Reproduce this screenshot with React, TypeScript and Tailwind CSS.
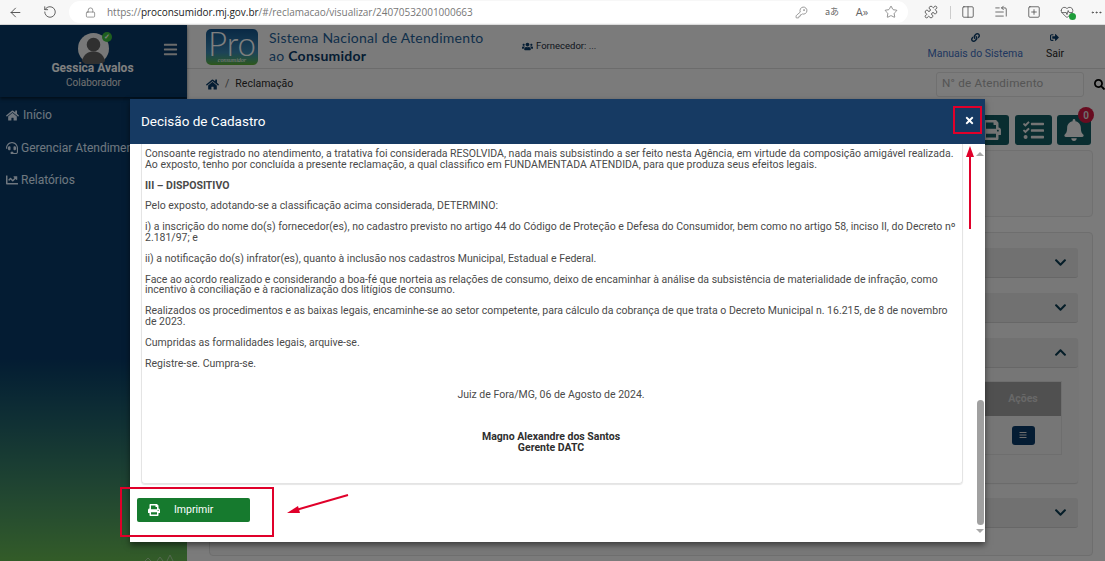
import {
  ArrowLeft,
  Columns2,
  Ellipsis,
  HeartPulse,
  KeyRound,
  Lock,
  Puzzle,
  RotateCw,
  SquarePlus,
  Star,
  ListStart,
} from "lucide-react";
import {
  FaBars,
  FaBell,
  FaChartLine,
  FaChevronDown,
  FaChevronUp,
  FaHeadset,
  FaHome,
  FaLink,
  FaPrint,
  FaSearch,
  FaSignOutAlt,
  FaTasks,
  FaTimes,
  FaUsers,
} from "react-icons/fa";

const BrowserBar = () => (
  <div className="flex h-[25px] shrink-0 items-center border-b border-[#dcdcdc] bg-[#f7f7f7] text-[#444]">
    <ArrowLeft className="ml-[8px] h-[15px] w-[15px]" strokeWidth={1.4} />
    <RotateCw className="ml-[20px] h-[14px] w-[14px] -scale-x-100" strokeWidth={1.4} />
    <div className="ml-[12px] flex h-[22px] w-[839px] items-center rounded-full bg-white pl-[16px] pr-[10px]">
      <Lock className="h-[11px] w-[11px] text-[#666]" strokeWidth={1.4} />
      <span className="ml-[11px] font-['Open_Sans',sans-serif] text-[10px] tracking-[-0.03px] text-[#777]">
        https://<span className="text-[#222]">proconsumidor.mj.gov.br</span>/#/reclamacao/visualizar/24070532001000663
      </span>
      <div className="ml-auto flex items-center gap-[14px] text-[#666]">
        <KeyRound className="mr-[2px] h-[13px] w-[13px]" strokeWidth={1.2} />
        <span className="w-[16px] text-center font-['Noto_Sans_CJK_JP',sans-serif] text-[9px]">aあ</span>
        <span className="w-[16px] text-center font-['Open_Sans',sans-serif] text-[11px]">A»</span>
        <Star className="h-[14px] w-[14px]" strokeWidth={1.2} />
      </div>
    </div>
    <Puzzle className="ml-[16px] h-[14px] w-[14px]" strokeWidth={1.4} />
    <div className="ml-[12px] h-[13px] w-px bg-[#ccc]" />
    <Columns2 className="ml-[10px] h-[14px] w-[14px]" strokeWidth={1.3} />
    <ListStart className="ml-[19px] h-[14px] w-[14px]" strokeWidth={1.3} />
    <SquarePlus className="ml-[19px] h-[14px] w-[14px]" strokeWidth={1.3} />
    <div className="relative ml-[19px]">
      <HeartPulse className="h-[14px] w-[14px]" strokeWidth={1.3} />
      <span className="absolute -bottom-[1px] -right-[2px] h-[7px] w-[7px] rounded-full bg-[#1f9d3a]" />
    </div>
    <Ellipsis className="ml-[16px] h-[13px] w-[13px]" strokeWidth={1.5} />
  </div>
);

const Sidebar = () => (
  <aside className="relative flex w-[187px] shrink-0 flex-col bg-linear-to-b from-[#083866] from-62% to-[#66b850] font-['Roboto',sans-serif]">
    <div className="relative flex h-[72px] shrink-0 flex-col items-center bg-[#083866] pt-[8px] shadow-[0_2px_3px_rgba(0,0,0,0.5)]">
      <div className="relative h-[31px] w-[31px]">
        <svg viewBox="0 0 32 32" className="h-full w-full">
          <circle cx="16" cy="16" r="16" fill="#f0f0f0" />
          <circle cx="16" cy="12" r="7" fill="#606060" />
          <path d="M4 29c2-8 7-10 12-10s10 2 12 10a16 16 0 0 1-24 0z" fill="#606060" />
        </svg>
        <span className="absolute -right-[3px] -top-[1px] flex h-[10px] w-[10px] items-center justify-center rounded-full bg-[#3fbf3f] text-[7px] font-bold leading-none text-white">
          ✓
        </span>
      </div>
      <span className="-mt-[3px] -translate-x-[1px] text-[12px] font-bold leading-[15px] text-white">Gessica Avalos</span>
      <span className="text-[10px] leading-[13px] text-[#e0e0e0]">Colaborador</span>
      <FaBars className="absolute right-[9px] top-[17px] h-[15px] w-[15px] text-[#d6d6d6]" />
    </div>
    <nav className="mt-[2px] flex flex-col text-[12px] leading-[32.5px] text-[#dfeeff]">
      <a className="flex items-center gap-[4px] pl-[6px]">
        <FaHome className="h-[13px] w-[13px]" /> Início
      </a>
      <a className="flex items-center gap-[3px] whitespace-nowrap pl-[6px]">
        <FaHeadset className="h-[12px] w-[12px]" /> Gerenciar Atendimentos
      </a>
      <a className="flex items-center gap-[3px] pl-[6px]">
        <FaChartLine className="h-[12px] w-[12px]" /> Relatórios
      </a>
    </nav>
    <svg viewBox="0 0 30 6" className="absolute bottom-0 right-[12px] h-[6px] w-[30px] text-[#a8d0a0]">
      <path d="M0 6l3-3 3 3M12 6l3-4 3 4M22 6l3-6 3 6" fill="none" stroke="currentColor" />
    </svg>
  </aside>
);

const TopHeader = () => (
  <header className="flex h-[44px] shrink-0 items-center border-b border-[#d8d8d8] pl-[19px] pr-[41px]">
    <div className="flex h-[36px] w-[52px] flex-col items-center justify-end rounded-[5px] bg-linear-to-b from-[#12528a] via-[#3a86b0] via-65% to-[#5cb02a] pb-[1px] text-white">
      <span className="font-['Lato',sans-serif] text-[33px] font-light leading-[27px]">Pro</span>
      <span className="font-['Liberation_Serif',serif] text-[6px] italic leading-[7px]">consumidor</span>
    </div>
    <div className="ml-[11px] w-[240px] font-['Lato',sans-serif] text-[14px] leading-[18px] tracking-[0.25px] text-[#1f5f96]">
      <div className="whitespace-nowrap">Sistema Nacional de Atendimento</div>
      <div>
        ao <b className="text-[#0a3a66]">Consumidor</b>
      </div>
    </div>
    <div className="ml-[13px] flex items-center gap-[3px] self-start pt-[14px] font-['Roboto',sans-serif] text-[9.5px] text-[#1c2c3c]">
      <FaUsers className="h-[11px] w-[11px] text-[#0a3a66]" /> Fornecedor: ...
    </div>
    <div className="ml-auto flex flex-col items-center gap-[5px] font-['Roboto',sans-serif] text-[10.5px] leading-[14px] text-[#3f6fc0]">
      <FaLink className="h-[9px] w-[9px] text-[#0a3a66]" />
      Manuais do Sistema
    </div>
    <div className="ml-[23px] flex flex-col items-center gap-[5px] font-['Roboto',sans-serif] text-[10.5px] leading-[14px] text-[#222]">
      <FaSignOutAlt className="h-[9px] w-[9px] text-[#0a3a66]" />
      Sair
    </div>
  </header>
);

const Breadcrumb = () => (
  <div className="flex h-[30px] shrink-0 items-center pl-[19px] font-['Roboto',sans-serif] text-[10.5px] text-[#2a2a2a]">
    <FaHome className="h-[13px] w-[13px] text-[#0a3a66]" />
    <span className="mx-[6px] text-[#666]">/</span>
    <span>Reclamação</span>
    <div className="ml-auto flex h-[25px] w-[148px] items-center rounded-[3px] border border-[#e0e0e0] bg-[#f8f8f8] pl-[5px] text-[11.7px] tracking-[0.2px] text-[#aaa]">
      N° de Atendimento
    </div>
    <div className="flex h-[25px] w-[21px] shrink-0 items-center justify-end">
      <FaSearch className="h-[11px] w-[11px] shrink-0 text-black" />
    </div>
  </div>
);

const Toolbar = () => (
  <div className="mt-[16px] flex shrink-0 justify-end pr-[14px]">
    <div className="flex h-[30px] w-[37px] items-center justify-center rounded-[3px] bg-[#125a60]">
      <FaPrint className="h-[20px] w-[20px] text-[#e8e8e8]" />
    </div>
    <div className="ml-[6px] flex h-[30px] w-[37px] items-center justify-center rounded-[3px] bg-[#125a60]">
      <FaTasks className="h-[21px] w-[21px] text-[#e8e8e8]" />
    </div>
    <div className="relative ml-[5px] flex h-[30px] w-[34px] items-center justify-center rounded-[3px] bg-[#125a60]">
      <FaBell className="h-[22px] w-[22px] text-[#f4f4f4]" />
      <span className="absolute -right-[3px] -top-[8px] flex h-[16px] w-[16px] items-center justify-center rounded-full bg-[#d01840] font-['Roboto',sans-serif] text-[10px] font-bold text-[#ddd]">
        0
      </span>
    </div>
  </div>
);

const AccordionRow = ({ open = false }: { open?: boolean }) => (
  <div className="flex h-[30px] shrink-0 items-center justify-end rounded-[3px] border-b border-[#cfcfcf] bg-[#e2e2e2] pr-[11px] text-[#0a3a50]">
    {open ? <FaChevronUp className="h-[13px] w-[13px]" /> : <FaChevronDown className="h-[13px] w-[13px]" />}
  </div>
);

const Panels = () => (
  <div className="ml-[22px] mr-[12px] mt-[5px] flex flex-col gap-[15px]">
    <div className="h-[67px] rounded-[4px] border border-[#e0e0e0] bg-[#f2f2f2]" />
    <div className="flex h-[324px] flex-col gap-[15px] rounded-[4px] border border-[#dcdcdc] bg-[#f0f0f0] pb-0 pl-[14px] pr-[14px] pt-[15px]">
      <AccordionRow />
      <AccordionRow />
      <div className="flex h-[145px] shrink-0 flex-col rounded-[3px] bg-[#ececec] shadow-[0_1px_1px_rgba(0,0,0,0.12)]">
        <AccordionRow open />
        <div className="ml-auto mr-[16px] mt-[13px] w-[78px] border border-[#dcdcdc] font-['Roboto',sans-serif]">
          <div className="flex h-[34px] items-center justify-center bg-[#a0a0a0] text-[10.5px] font-bold text-[#d0d0d0]">
            Ações
          </div>
          <div className="flex h-[38px] items-center justify-center">
            <span className="flex h-[19px] w-[23px] items-center justify-center rounded-[3px] bg-[#083866]">
              <FaBars className="h-[8px] w-[8px] text-[#ddd]" />
            </span>
          </div>
        </div>
      </div>
      <AccordionRow />
    </div>
  </div>
);

const paragraphs = [
  "Pelo exposto, adotando-se a classificação acima considerada, DETERMINO:",
  "i) a inscrição do nome do(s) fornecedor(es), no cadastro previsto no artigo 44 do Código de Proteção e Defesa do Consumidor, bem como no artigo 58, inciso II, do Decreto nº 2.181/97; e",
  "ii) a notificação do(s) infrator(es), quanto à inclusão nos cadastros Municipal, Estadual e Federal.",
  "Face ao acordo realizado e considerando a boa-fé que norteia as relações de consumo, deixo de encaminhar à análise da subsistência de materialidade de infração, como incentivo à conciliação e à racionalização dos litígios de consumo.",
  "Realizados os procedimentos e as baixas legais, encaminhe-se ao setor competente, para cálculo da cobrança de que trata o Decreto Municipal n. 16.215, de 8 de novembro de 2023.",
  "Cumpridas as formalidades legais, arquive-se.",
  "Registre-se. Cumpra-se.",
];

const DecisionModal = () => (
  <div className="absolute left-[130px] top-[74px] z-20 flex h-[443px] w-[855px] flex-col bg-white font-['Roboto',sans-serif] shadow-[0_3px_6px_rgba(0,0,0,0.5)]">
    <div className="flex h-[45px] shrink-0 items-center justify-between bg-[#163a63] pl-[11px] pr-[12px] text-white">
      <span className="text-[13.5px]">Decisão de Cadastro</span>
      <FaTimes className="mb-[2px] mr-[-2px] h-[11px] w-[11px]" />
    </div>
    <div className="flex min-h-0 flex-1">
      <div className="flex min-w-0 flex-1 flex-col pl-[11px] pr-[12px]">
        <div className="h-[340px] shrink-0 rounded-b-[4px] border border-t-0 border-[#e4e4e4] pl-[3px] pr-[5px] pt-[5px] text-[10.5px] leading-[10.8px] text-[#4a4a4a] shadow-[0_1px_1px_rgba(0,0,0,0.1)]">
          <p className="mb-[10px]">
            Consoante registrado no atendimento, a tratativa foi considerada RESOLVIDA, nada mais subsistindo a ser feito nesta Agência, em virtude da composição amigável realizada. Ao exposto, tenho por concluída a presente reclamação, a qual classifico em FUNDAMENTADA ATENDIDA, para que produza seus efeitos legais.
          </p>
          <p className="mb-[10px] font-bold">III – DISPOSITIVO</p>
          {paragraphs.map((text) => (
            <p key={text} className="mb-[10px]">
              {text}
            </p>
          ))}
          <p className="mt-[21px] text-center">Juiz de Fora/MG, 06 de Agosto de 2024.</p>
          <p className="mt-[31px] text-center font-bold text-[#2e2e2e]">
            Magno Alexandre dos Santos
            <br />
            Gerente DATC
          </p>
        </div>
        <button className="ml-[-4px] mt-[14px] flex h-[24px] w-[113px] items-center rounded-[2px] bg-[#167a2e] pl-[11px] text-[10.5px] text-white">
          <FaPrint className="h-[12px] w-[12px]" />
          <span className="ml-[14px]">Imprimir</span>
        </button>
      </div>
      <div className="flex w-[10px] shrink-0 flex-col items-center pb-[9px] pt-[8px]">
        <span className="h-0 w-0 border-x-[4px] border-b-[4px] border-x-transparent border-b-[#a8a8a8]" />
        <span className="mt-auto h-[125px] w-[7px] rounded-full bg-[#a0a0a0]" />
        <span className="mt-[4px] h-0 w-0 border-x-[4px] border-t-[4px] border-x-transparent border-t-[#a8a8a8]" />
      </div>
    </div>
  </div>
);

const Annotations = () => (
  <>
    <div className="absolute left-[953px] top-[81px] z-30 h-[28px] w-[29px] border-2 border-[#e0002a]" />
    <div className="absolute left-[120px] top-[462px] z-30 h-[50px] w-[154px] border-2 border-[#e0002a]" />
    <svg className="absolute left-0 top-0 z-30 h-[536px] w-[1105px]" viewBox="0 25 1105 536">
      <path d="M970 229V152" stroke="#e0002a" strokeWidth="2" />
      <path d="M970 146l-4 11h8z" fill="#e0002a" />
      <path d="M348 495L296 510" stroke="#e0002a" strokeWidth="2" />
      <path d="M287 513l11-7 2 7z" fill="#e0002a" />
    </svg>
  </>
);

export default function App() {
  return (
    <div className="flex h-[561px] w-[1105px] flex-col overflow-hidden bg-white">
      <BrowserBar />
      <div className="relative flex min-h-0 flex-1">
        <Sidebar />
        <main className="flex min-w-0 flex-1 flex-col bg-[#f6f6f6]">
          <TopHeader />
          <Breadcrumb />
          <Toolbar />
          <Panels />
        </main>
        <div className="absolute inset-0 z-10 bg-black/50" />
        <DecisionModal />
        <Annotations />
      </div>
    </div>
  );
}
